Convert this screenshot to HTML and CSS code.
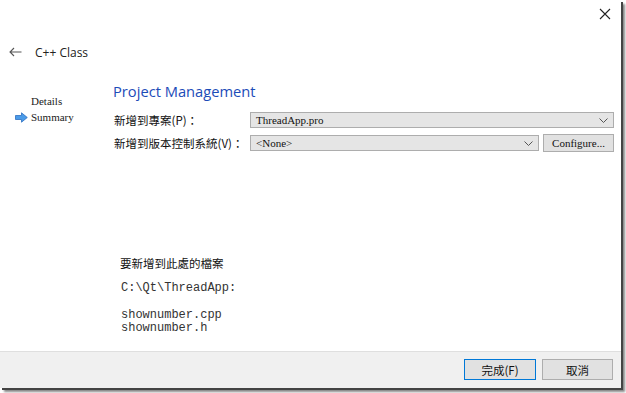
FILE: index.html
```html
<!DOCTYPE html>
<html>
<head>
<meta charset="utf-8">
<link rel="stylesheet" href="styles.css">
</head>
<body>
<div class="window">
  <div class="topbar">
    <svg class="close" width="12" height="12" viewBox="0 0 12 12"><path d="M1 1 L11 11 M11 1 L1 11" stroke="#222" stroke-width="1.1" fill="none"/></svg>
  </div>
  <div class="titlerow">
    <svg class="back" width="13" height="10" viewBox="0 0 13 10"><path d="M12.5 5 H1 M5 1 L1 5 L5 9" stroke="#555" stroke-width="1.1" fill="none"/></svg>
    <span class="title">C++ Class</span>
  </div>
  <div class="main">
    <div class="sidebar">
      <div class="step">Details</div>
      <div class="step current">
        <svg class="cur" width="13" height="11" viewBox="0 0 13 11"><path d="M0.5 3.5 H6.5 V0.8 L12.3 5.5 L6.5 10.2 V7.5 H0.5 Z" fill="#4a9be8" stroke="#2d6fc0" stroke-width="0.8"/></svg>
        Summary
      </div>
    </div>
    <div class="content">
      <h1 class="heading">Project Management</h1>
      <div class="form">
        <label class="lbl">新增到專案(P)：</label>
        <div class="combo wide"><span>ThreadApp.pro</span><svg class="chev" width="9" height="5" viewBox="0 0 9 5"><path d="M0.5 0.5 L4.5 4.5 L8.5 0.5" stroke="#555" fill="none"/></svg></div>
        <label class="lbl">新增到版本控制系統(V)：</label>
        <div class="vcs">
          <div class="combo"><span>&lt;None&gt;</span><svg class="chev" width="9" height="5" viewBox="0 0 9 5"><path d="M0.5 0.5 L4.5 4.5 L8.5 0.5" stroke="#555" fill="none"/></svg></div>
          <button class="btn cfg">Configure...</button>
        </div>
      </div>
      <div class="files">
        <div class="files-title">要新增到此處的檔案</div>
        <pre class="mono">C:\Qt\ThreadApp:

shownumber.cpp
shownumber.h</pre>
      </div>
    </div>
  </div>
  <div class="footer">
    <button class="btn fbtn primary">完成(F)</button>
    <button class="btn fbtn">取消</button>
  </div>
</div>
</body>
</html>
```
FILE: styles.css
```css
html, body {
  margin: 0;
  padding: 0;
  background: #fff;
  width: 626px;
  height: 393px;
  overflow: hidden;
}
.window {
  width: 621px;
  height: 388px;
  background: #fff;
  display: flex;
  flex-direction: column;
  box-shadow: 2px 2px 0 #444, 4px 4px 2px #888;
  font-family: "Noto Sans CJK TC", "Noto Sans", sans-serif;
}
.topbar {
  height: 30px;
  display: flex;
  justify-content: flex-end;
  align-items: flex-start;
}
.close {
  margin: 8px 10px 0 0;
}
.titlerow {
  height: 44px;
  display: flex;
  align-items: center;
}
.back {
  margin-left: 9px;
  margin-right: 13px;
}
.title {
  font-family: "Open Sans", "Noto Sans", sans-serif;
  font-size: 12px;
  color: #222;
}
.main {
  flex: 1;
  display: flex;
}
.sidebar {
  width: 113px;
  padding-top: 19px;
  box-sizing: border-box;
}
.step {
  font-family: "Liberation Serif", serif;
  font-size: 11px;
  line-height: 16px;
  color: #222;
  padding-left: 31px;
  position: relative;
}
.cur {
  position: absolute;
  left: 15px;
  top: 3px;
}
.content {
  flex: 1;
  padding-top: 8px;
  padding-right: 7px;
  display: flex;
  flex-direction: column;
}
.heading {
  margin: 0;
  font-family: "Open Sans", "Noto Sans", sans-serif;
  font-weight: normal;
  font-size: 14.7px;
  line-height: 18px;
  color: #1c4cb8;
}
.form {
  margin-top: 12px;
  display: grid;
  grid-template-columns: 137px 1fr;
  row-gap: 6px;
  align-items: center;
}
.lbl {
  font-size: 11.5px;
  color: #111;
  padding-left: 1px;
  line-height: 16px;
}
.combo {
  height: 16px;
  box-sizing: border-box;
  border: 1px solid #adadad;
  background: #e5e5e5;
  display: flex;
  align-items: center;
  justify-content: space-between;
  padding: 0 5px 0 5px;
  font-family: "Liberation Serif", serif;
  font-size: 11px;
  color: #111;
  flex: 1;
}
.chev { flex: none; }
.vcs {
  display: flex;
  gap: 4px;
  align-items: center;
}
.btn {
  font-family: "Liberation Serif", serif;
  font-size: 11px;
  color: #111;
  background: #e1e1e1;
  border: 1px solid #adadad;
  padding: 0;
  margin: 0;
}
.cfg {
  width: 71px;
  height: 18px;
}
.files {
  margin-top: 103px;
  padding-left: 7px;
}
.files-title {
  font-size: 11.5px;
  line-height: 16px;
  color: #111;
}
.mono {
  margin: 11px 0 0 1px;
  font-family: "Liberation Mono", monospace;
  font-size: 12px;
  line-height: 13.3px;
  color: #333;
}
.footer {
  height: 37px;
  box-sizing: border-box;
  border-top: 1px solid #dfdfdf;
  background: #f0f0f0;
  display: flex;
  justify-content: flex-end;
  align-items: flex-start;
  gap: 6px;
  padding: 7px 8px 0 0;
}
.fbtn {
  width: 71px;
  height: 21px;
  font-family: "Noto Sans CJK TC", sans-serif;
  font-size: 11.5px;
}
.primary {
  border: 1px solid #0078d7;
  width: 72px;
}
```
